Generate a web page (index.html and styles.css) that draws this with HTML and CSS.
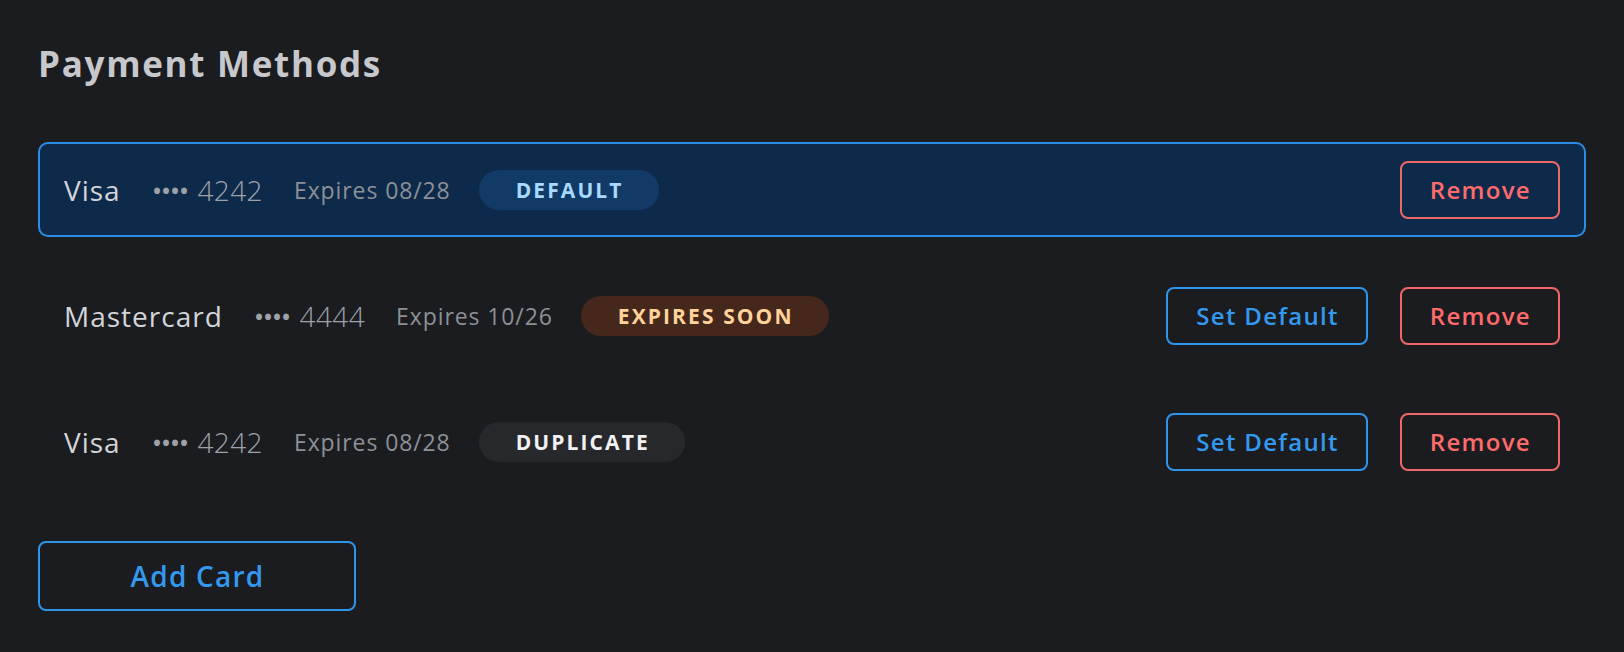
FILE: index.html
```html
<!DOCTYPE html>
<html lang="en">
<head>
<meta charset="utf-8">
<title>Payment Methods</title>
<link rel="stylesheet" href="styles.css">
</head>
<body>
<main class="page">
  <h1 class="title">Payment Methods</h1>
  <ul class="cards">
    <li class="card card--default">
      <div class="card-info">
        <span class="brand">Visa</span>
        <span class="number"><span class="dots">••••</span> 4242</span>
        <span class="expiry">Expires 08/28</span>
        <span class="badge badge--default">DEFAULT</span>
      </div>
      <div class="actions">
        <button class="btn btn--danger">Remove</button>
      </div>
    </li>
    <li class="card">
      <div class="card-info">
        <span class="brand">Mastercard</span>
        <span class="number"><span class="dots">••••</span> 4444</span>
        <span class="expiry">Expires 10/26</span>
        <span class="badge badge--warn">EXPIRES SOON</span>
      </div>
      <div class="actions">
        <button class="btn btn--primary">Set Default</button>
        <button class="btn btn--danger">Remove</button>
      </div>
    </li>
    <li class="card">
      <div class="card-info">
        <span class="brand">Visa</span>
        <span class="number"><span class="dots">••••</span> 4242</span>
        <span class="expiry">Expires 08/28</span>
        <span class="badge badge--dup">DUPLICATE</span>
      </div>
      <div class="actions">
        <button class="btn btn--primary">Set Default</button>
        <button class="btn btn--danger">Remove</button>
      </div>
    </li>
  </ul>
  <button class="btn btn--add">Add Card</button>
</main>
</body>
</html>
```
FILE: styles.css
```css
* { box-sizing: border-box; }
html, body {
  margin: 0;
  padding: 0;
  background: #1b1c20;
}
body {
  font-family: "Open Sans", "Liberation Sans", sans-serif;
  color: #d3d5d9;
}
.page {
  padding: 43px 38px 40px 38px;
}
.title {
  margin: 0 0 57px 0;
  font-size: 35px;
  line-height: 42px;
  font-weight: 700;
  letter-spacing: 1.7px;
  color: #c7c8cc;
}
.cards {
  list-style: none;
  margin: 0;
  padding: 0;
  display: flex;
  flex-direction: column;
  gap: 31px;
}
.card {
  display: flex;
  align-items: center;
  justify-content: space-between;
  height: 95px;
  padding: 0 24px;
  border: 2px solid transparent;
  border-radius: 10px;
}
.card--default {
  background: #0e2a4b;
  border-color: #2b8de6;
}
.card-info {
  display: flex;
  align-items: center;
  gap: 31px;
}
.brand {
  font-size: 28px;
  font-weight: 500;
  letter-spacing: 1px;
  color: #d3d5d9;
}
.number {
  font-size: 28px;
  font-weight: 300;
  letter-spacing: 0.4px;
  color: #9ea2a8;
}
.dots {
  font-weight: 400;
  letter-spacing: -1.5px;
  margin-right: 2px;
}
.expiry {
  font-size: 23px;
  font-weight: 400;
  letter-spacing: 0.9px;
  color: #8d9096;
}
.badge {
  display: inline-flex;
  align-items: center;
  height: 40px;
  margin-left: -3px;
  padding: 0 35px 0 37px;
  border-radius: 20px;
  font-size: 21px;
  font-weight: 700;
  letter-spacing: 2.1px;
}
.badge--default { background: #123a66; color: #a8d9ff; }
.badge--warn { background: #45271c; color: #ffd39a; }
.badge--dup { background: #27282c; color: #f1f1f3; }
.actions {
  display: flex;
  align-items: center;
  gap: 32px;
}
.btn {
  font-family: inherit;
  background: transparent;
  height: 58px;
  padding: 0 27px 0 28px;
  border: 2px solid;
  border-radius: 8px;
  font-size: 24px;
  font-weight: 600;
  letter-spacing: 1.3px;
  cursor: pointer;
}
.btn--danger { border-color: #f06767; color: #ff6a6a; }
.btn--primary { border-color: #2f95ea; color: #3399ee; }
.btn--add {
  margin-top: 52px;
  width: 318px;
  height: 70px;
  border-color: #2f95ea;
  color: #3399ee;
  font-size: 28px;
  letter-spacing: 1.2px;
}
```
